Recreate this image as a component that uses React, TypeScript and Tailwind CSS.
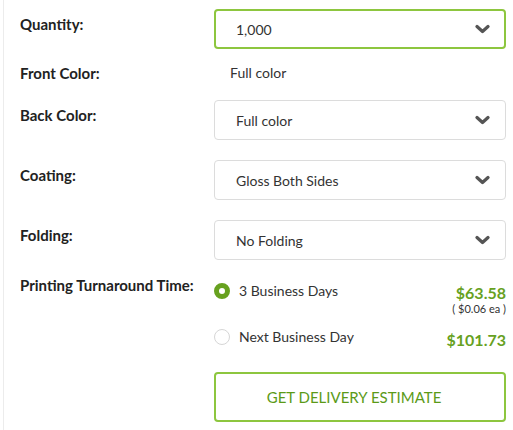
import React from 'react';

function Chevron() {
    return (
        <svg width="15" height="10" viewBox="0 0 15 10" fill="none" stroke="#555" strokeWidth="3.2" strokeLinecap="round" strokeLinejoin="round">
            <polyline points="2,2.5 7.5,7.5 13,2.5" />
        </svg>
    );
}

function Select({ value, active }: { value: string; active?: boolean }) {
    return (
        <div
            className={
                'flex h-10 items-center justify-between rounded-[4px] bg-white pl-[20px] pr-[14px] text-[14px] text-[#333] ' +
                (active ? 'border-2 border-[#8dc63f]' : 'border border-[#dcdcdc] pr-[15px]')
            }
        >
            <span className={active ? '' : 'pl-px'}>{value}</span>
            <Chevron />
        </div>
    );
}

function Label({ children }: { children: React.ReactNode }) {
    return <div className="w-[194px] shrink-0 pt-[5px] text-[15px] font-bold leading-5 text-[#222]">{children}</div>;
}

function Radio({ checked }: { checked?: boolean }) {
    return checked ? (
        <span className="block h-4 w-4 shrink-0 rounded-full border-[5px] border-[#67a11f] bg-white" />
    ) : (
        <span className="block h-4 w-4 shrink-0 rounded-full border border-[#d6d6d6] bg-white" />
    );
}

export default function App() {
    return (
        <div className="w-[513px] h-[430px] overflow-hidden bg-white" style={{ fontFamily: 'Lato, "Open Sans", sans-serif' }}>
            <div className="ml-[3px] h-full border-l border-[#ececec] pl-4 pr-[7px] pt-[9px]">
                <div className="flex">
                    <Label>Quantity:</Label>
                    <div className="flex-1">
                        <Select value="1,000" active />
                    </div>
                </div>

                <div className="mt-[14px] flex">
                    <div className="w-[194px] shrink-0 text-[15px] font-bold leading-5 text-[#222]">Front Color:</div>
                    <div className="flex-1 pl-4 text-[14px] leading-5 text-[#333]">Full color</div>
                </div>

                <div className="mt-[17px] flex">
                    <Label>Back Color:</Label>
                    <div className="flex-1">
                        <Select value="Full color" />
                    </div>
                </div>

                <div className="mt-5 flex">
                    <Label>Coating:</Label>
                    <div className="flex-1">
                        <Select value="Gloss Both Sides" />
                    </div>
                </div>

                <div className="mt-5 flex">
                    <Label>Folding:</Label>
                    <div className="flex-1">
                        <Select value="No Folding" />
                    </div>
                </div>

                <div className="mt-[10px] flex">
                    <Label>Printing Turnaround Time:</Label>
                    <div className="flex-1">
                        <div className="flex items-start justify-between pt-[11px]">
                            <div className="flex items-center gap-[9px]">
                                <Radio checked />
                                <span className="text-[14px] leading-5 text-[#333]">3 Business Days</span>
                            </div>
                            <div className="pt-[2px] text-right">
                                <div className="text-[16px] font-bold leading-5 text-[#67a11f]">$63.58</div>
                                <div className="text-[11px] leading-3 text-[#333]">( $0.06 ea )</div>
                            </div>
                        </div>
                        <div className="mt-[12px] flex items-start justify-between">
                            <div className="flex items-center gap-[9px]">
                                <Radio />
                                <span className="text-[14px] leading-5 text-[#333]">Next Business Day</span>
                            </div>
                            <div className="pt-[3px] text-[16px] font-bold leading-5 text-[#67a11f]">$101.73</div>
                        </div>
                        <button className="mt-[22px] flex h-[50px] w-full items-center justify-center rounded-[4px] border-2 border-[#8dc63f] bg-white pr-[12px] text-[15px] text-[#5b9a17]">
                            GET DELIVERY ESTIMATE
                        </button>
                    </div>
                </div>
            </div>
        </div>
    );
}
